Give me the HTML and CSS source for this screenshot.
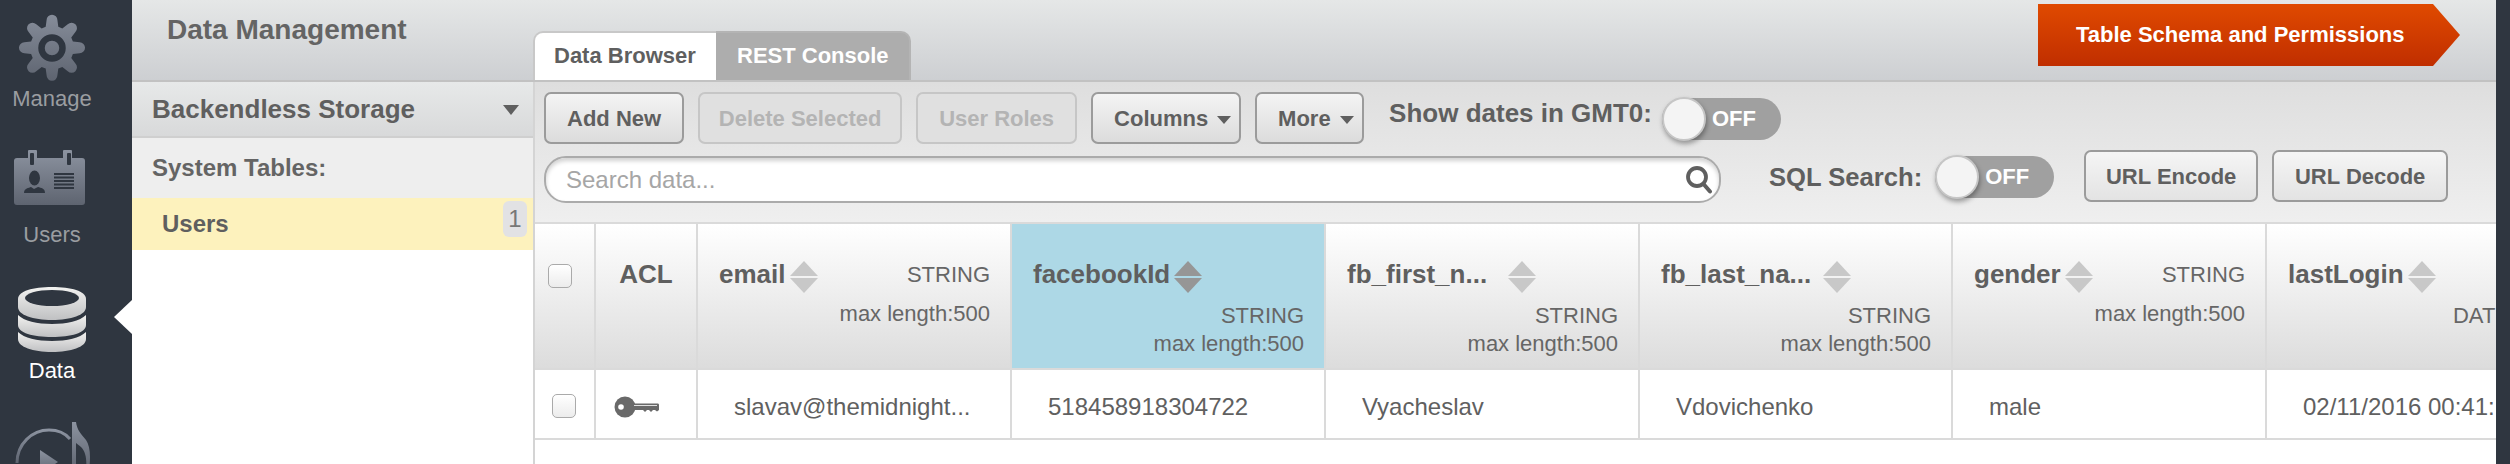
FILE: index.html
```html
<!DOCTYPE html>
<html lang="en">
<head>
<meta charset="utf-8">
<title>Data Management</title>
<link rel="stylesheet" href="styles.css">
</head>
<body>
<div class="app">
  <nav class="nav">
    <div class="nav-item">
      <div class="nav-icon">
        <svg class="ico-gear" width="68" height="68" viewBox="0 0 68 68">
          <defs>
            <linearGradient id="navg" x1="0" y1="0" x2="0" y2="1"><stop offset="0" stop-color="#868d9a"/><stop offset="1" stop-color="#5e6470"/></linearGradient>
          </defs>
          <g fill="url(#navg)">
            <path d="M28 3a6 6 0 0 1 12 0l1 7.500 4.500 1.800 6-4.600a6 6 0 0 1 8.500 8.500l-4.600 6 1.800 4.500 7.500 1a6 6 0 0 1 0 12l-7.500 1-1.800 4.500 4.600 6a6 6 0 0 1-8.500 8.500l-6-4.600-4.500 1.800-1 7.500a6 6 0 0 1-12 0l-1-7.500-4.500-1.800-6 4.600a6 6 0 0 1-8.500-8.500l4.600-6-1.800-4.500-7.500-1a6 6 0 0 1 0-12l7.500-1 1.800-4.500-4.600-6a6 6 0 0 1 8.500-8.500l6 4.600 4.500-1.800z" transform="translate(3.400 3.400) scale(.9)"/>
          </g>
          <circle cx="34" cy="34" r="10.500" fill="none" stroke="#2f3640" stroke-width="6.500"/>
        </svg>
      </div>
      <span class="nav-label">Manage</span>
    </div>
    <div class="nav-item">
      <div class="nav-icon nav-icon-card">
        <svg width="74" height="56" viewBox="0 0 74 56">
          <defs>
            <linearGradient id="navc" x1="0" y1="0" x2="0" y2="1"><stop offset="0" stop-color="#8c93a0"/><stop offset="1" stop-color="#5e6470"/></linearGradient>
          </defs>
          <path d="M4 8h11V1a1 1 0 0 1 1-1h7a1 1 0 0 1 1 1v7h26V1a1 1 0 0 1 1-1h7a1 1 0 0 1 1 1v7h10a3 3 0 0 1 3 3v41a3 3 0 0 1-3 3H4a3 3 0 0 1-3-3V11a3 3 0 0 1 3-3z" fill="url(#navc)"/>
          <rect x="17" y="3" width="4" height="12" rx="1" fill="#2f3640"/>
          <rect x="54" y="3" width="4" height="12" rx="1" fill="#2f3640"/>
          <ellipse cx="21.500" cy="28" rx="5.500" ry="7.500" fill="#2f3640"/>
          <path d="M11 43c0-5 5-5 7-6l3 2 4-2c3 1 7 1 7 6z" fill="#2f3640"/>
          <path d="M41 24h20M41 27.500h20M41 31h20M41 34.500h20M41 38h20" stroke="#2f3640" stroke-width="1.800"/>
        </svg>
      </div>
      <span class="nav-label">Users</span>
    </div>
    <div class="nav-item nav-item-active">
      <div class="nav-icon">
        <svg width="70" height="66" viewBox="0 0 70 66">
          <defs>
            <linearGradient id="navd" x1="0" y1="0" x2="0" y2="1"><stop offset="0" stop-color="#f2f2f0"/><stop offset="1" stop-color="#bfc0c2"/></linearGradient>
          </defs>
          <path d="M1 13C1 5 16 1 35 1s34 4 34 12v8c0 8-15 13-34 13S1 29 1 21z" fill="url(#navd)"/>
          <path d="M1 29c6 6 19 9 34 9s28-3 34-9v10c0 8-15 12-34 12S1 47 1 39z" fill="url(#navd)"/>
          <path d="M1 46c6 6 19 9 34 9s28-3 34-9v7c0 8-15 13-34 13S1 61 1 53z" fill="url(#navd)"/>
          <ellipse cx="35" cy="12" rx="27" ry="8" fill="#2f3640"/>
        </svg>
      </div>
      <span class="nav-label">Data</span>
    </div>
    <div class="nav-item">
      <div class="nav-icon">
        <svg width="78" height="60" viewBox="0 0 78 60">
          <defs>
            <linearGradient id="navm" x1="0" y1="0" x2="0" y2="1"><stop offset="0" stop-color="#8c93a0"/><stop offset="1" stop-color="#5e6470"/></linearGradient>
          </defs>
          <path d="M4 41C4 22 19 8 36 8c9 0 16 3 21 9" fill="none" stroke="url(#navm)" stroke-width="3"/>
          <path d="M27 28l18 12-18 12z" fill="url(#navm)"/>
          <path d="M59 0h4c1 8 5 12 10 18 4 6 5 16 3 30l-3 1c1-11 0-19-5-24-2-2-4-3-5-4v28h-4z" fill="url(#navm)"/>
        </svg>
      </div>
    </div>
  </nav>

  <div class="content">
    <header class="topbar">
      <h1 class="title">Data Management</h1>
      <div class="tabs">
        <span class="tab tab-active">Data Browser</span>
        <span class="tab tab-muted">REST Console</span>
      </div>
      <button class="schema">Table Schema and Permissions</button>
    </header>

    <div class="body">
      <aside class="side">
        <div class="side-head">
          <span>Backendless Storage</span>
          <svg class="side-caret" width="16" height="10" viewBox="0 0 16 10"><path d="M0 0h16L8 10z"/></svg>
        </div>
        <div class="side-group">System Tables:</div>
        <div class="side-item">
          <span>Users</span>
          <span class="badge">1</span>
        </div>
      </aside>

      <main class="main">
        <div class="toolbar">
          <div class="tool-row">
            <button class="btn">Add New</button>
            <button class="btn btn-off btn-delete">Delete Selected</button>
            <button class="btn btn-off">User Roles</button>
            <button class="btn btn-drop btn-columns">Columns<svg class="drop" width="14" height="8" viewBox="0 0 14 8"><path d="M0 0h14L7 8z"/></svg></button>
            <button class="btn btn-drop btn-more">More<svg class="drop" width="14" height="8" viewBox="0 0 14 8"><path d="M0 0h14L7 8z"/></svg></button>
            <span class="tool-label tool-label-gmt">Show dates in GMT0:</span>
            <span class="toggle toggle-gmt"><span class="knob"></span><span class="off">OFF</span></span>
          </div>
          <div class="tool-row tool-row-2">
            <div class="search">
              <span class="placeholder">Search data...</span>
              <svg class="search-ico" width="28" height="28" viewBox="0 0 28 28"><circle cx="12" cy="11" r="9" fill="none" stroke="#5f5f5f" stroke-width="3.800"/><path d="M18.500 18l6.500 7.500" stroke="#5f5f5f" stroke-width="4" stroke-linecap="round"/></svg>
            </div>
            <span class="tool-label tool-label-sql">SQL Search:</span>
            <span class="toggle toggle-sql"><span class="knob"></span><span class="off">OFF</span></span>
            <button class="btn btn-url btn-encode">URL Encode</button>
            <button class="btn btn-url">URL Decode</button>
          </div>
        </div>

        <div class="grid">
          <div class="grid-row grid-head">
            <div class="cell c-check"><span class="check check-head"></span></div>
            <div class="cell c-acl"><span class="acl">ACL</span></div>
            <div class="cell c-col hcell">
              <div class="hline"><span class="hname">email</span><span class="sort"><i class="up"></i><i class="down"></i></span><span class="type">STRING</span></div>
              <div class="meta meta-inline">max length:500</div>
            </div>
            <div class="cell c-col hcell hcell-sorted">
              <div class="hline"><span class="hname">facebookId</span><span class="sort"><i class="up"></i><i class="down"></i></span></div>
              <div class="meta meta-first">STRING</div>
              <div class="meta">max length:500</div>
            </div>
            <div class="cell c-col hcell">
              <div class="hline"><span class="hname hname-cut">fb_first_n...</span><span class="sort"><i class="up"></i><i class="down"></i></span></div>
              <div class="meta meta-first">STRING</div>
              <div class="meta">max length:500</div>
            </div>
            <div class="cell c-col c-col-narrow hcell">
              <div class="hline"><span class="hname hname-cut2">fb_last_na...</span><span class="sort"><i class="up"></i><i class="down"></i></span></div>
              <div class="meta meta-first">STRING</div>
              <div class="meta">max length:500</div>
            </div>
            <div class="cell c-col hcell">
              <div class="hline"><span class="hname">gender</span><span class="sort"><i class="up"></i><i class="down"></i></span><span class="type">STRING</span></div>
              <div class="meta meta-inline">max length:500</div>
            </div>
            <div class="cell c-last hcell">
              <div class="hline"><span class="hname">lastLogin</span><span class="sort"><i class="up"></i><i class="down"></i></span></div>
              <div class="meta meta-first">DATE</div>
            </div>
          </div>
          <div class="grid-row grid-data">
            <div class="cell c-check"><span class="check check-row"></span></div>
            <div class="cell c-acl">
              <svg class="key" width="46" height="22" viewBox="0 0 46 22"><circle cx="11" cy="11" r="10.500" fill="#696969"/><circle cx="7" cy="11" r="2.800" fill="#fff"/><path d="M18 7.500h26a1.500 1.500 0 0 1 1 1.500v5l-2 1.500-2-1.500h-2l-2 2-2-2h-2l-2 2-2-2H18z" fill="#696969"/><path d="M20 9.500h23" stroke="#fff" stroke-width=".8"/></svg>
            </div>
            <div class="cell c-col dcell">slavav@themidnight...</div>
            <div class="cell c-col dcell">518458918304722</div>
            <div class="cell c-col dcell">Vyacheslav</div>
            <div class="cell c-col c-col-narrow dcell">Vdovichenko</div>
            <div class="cell c-col dcell">male</div>
            <div class="cell c-last dcell">02/11/2016 00:41:</div>
          </div>
        </div>
      </main>
    </div>
  </div>

  <div class="strip"></div>
</div>
</body>
</html>
```

FILE: styles.css
```css
* { box-sizing: border-box; }
html, body { margin: 0; padding: 0; }
body {
  width: 2510px;
  height: 464px;
  overflow: hidden;
  background: #fff;
  font-family: "Liberation Sans", Arial, sans-serif;
  color: #5f5f5f;
}
button { font-family: inherit; margin: 0; }
.app { display: flex; width: 2510px; height: 464px; overflow: hidden; }

/* left nav */
.nav { width: 132px; flex: none; height: 464px; background: #2f3640; overflow: hidden; }
.nav-item { position: relative; height: 136px; padding: 14px 28px 0 0; display: flex; flex-direction: column; align-items: center; text-align: center; }
.nav-icon { height: 72px; display: flex; justify-content: center; align-items: flex-start; }
.nav-icon-card { margin-right: 4px; }
.ico-gear { display: block; }
.nav-label { font-size: 22px; line-height: 26px; color: #9a9da1; }
.nav-item-active .nav-label { color: #fff; }
.nav-item-active::after {
  content: "";
  position: absolute;
  right: 0;
  top: 28px;
  border-style: solid;
  border-width: 17px 18px 17px 0;
  border-color: transparent #fff transparent transparent;
}
.strip { width: 14px; flex: none; background: #2f3640; }

/* top bar */
.content { flex: 1; min-width: 0; display: flex; flex-direction: column; }
.topbar {
  height: 82px;
  flex: none;
  display: flex;
  background: linear-gradient(#e5e7e7, #cdcfd2);
  border-bottom: 2px solid #c2c2c2;
}
.title { width: 401px; flex: none; margin: 0; padding: 14px 0 0 35px; font-size: 28px; line-height: 32px; font-weight: bold; color: #646464; }
.tabs { display: flex; align-self: flex-end; height: 49px; }
.tab { display: flex; align-items: center; height: 49px; padding-bottom: 2px; font-size: 22px; font-weight: bold; }
.tab-active { width: 183px; padding-left: 19px; background: #fff; color: #5f5f5f; border: 2px solid #c8c8c8; border-right: 0; border-bottom: 0; border-radius: 10px 0 0 0; }
.tab-muted { width: 195px; padding-left: 21px; background: #adadad; color: #fff; border: 2px solid #b4b4b4; border-left: 0; border-bottom: 0; border-radius: 0 10px 0 0; }
.schema {
  width: 422px;
  height: 62px;
  margin: 4px 36px 0 auto;
  padding: 0 54px 0 38px;
  border: 0;
  white-space: nowrap;
  text-align: left;
  color: #fff;
  font-size: 22px;
  font-weight: bold;
  background: linear-gradient(#e04a00, #c02e00);
  clip-path: polygon(0 0, 395px 0, 100% 50%, 395px 100%, 0 100%);
}

/* body split */
.body { flex: 1; min-height: 0; display: flex; }
.side { width: 401px; flex: none; }
.side-head {
  height: 56px;
  display: flex;
  align-items: center;
  justify-content: space-between;
  padding: 0 14px 0 20px;
  background: linear-gradient(#e7e9e9, #d8d9da);
  border-bottom: 2px solid #cfcfcf;
  font-size: 26px;
  font-weight: bold;
  color: #5f5f5f;
}
.side-caret { fill: #5f5f5f; margin-top: 2px; }
.side-group { height: 60px; display: flex; align-items: center; padding-left: 20px; background: #eee; font-size: 24px; font-weight: bold; color: #646464; }
.side-item {
  height: 52px;
  display: flex;
  align-items: center;
  justify-content: space-between;
  padding: 0 6px 0 30px;
  background: #fdf2bd;
  font-size: 24px;
  font-weight: bold;
  color: #5f5f5f;
}
.badge { width: 24px; height: 36px; margin-bottom: 10px; display: flex; align-items: center; justify-content: center; border-radius: 6px; background: #e2e2e4; font-size: 24px; font-weight: normal; color: #777; }

/* toolbar */
.main { flex: 1; min-width: 0; overflow: hidden; border-left: 2px solid #d4d4d4; }
.toolbar { height: 140px; padding: 10px 0 0 9px; background: linear-gradient(#dedede, #efefef); }
.tool-row { display: flex; align-items: flex-start; height: 52px; }
.tool-row-2 { margin-top: 6px; height: 53px; }
.btn {
  height: 52px;
  padding: 2px 21px 0;
  margin-right: 14px;
  border: 2px solid #9b9b9b;
  border-radius: 7px;
  background: linear-gradient(#f4f4f4, #dcdcdc);
  color: #5f5f5f;
  font-size: 22px;
  font-weight: bold;
  white-space: nowrap;
}
.btn-off { background: #e0e0e0; border-color: #c6c6c6; color: #b4b4b4; }
.btn-delete { width: 204px; padding: 2px 0 0; }
.btn-drop { padding: 2px 0 0 21px; text-align: left; }
.btn-columns { width: 150px; }
.btn-more { width: 109px; }
.drop { fill: #5f5f5f; margin-left: 9px; vertical-align: 2px; }
.tool-label { font-size: 25.600px; font-weight: bold; color: #5f5f5f; white-space: nowrap; line-height: 30px; }
.tool-label-gmt { font-size: 26px; margin: 6px 10px 0 11px; }
.tool-label-sql { margin: 12px 13px 0 48px; }
.toggle { display: flex; align-items: center; width: 119px; height: 42px; border-radius: 21px; background: #a0a0a0; }
.toggle-gmt { margin-top: 6px; }
.toggle-sql { margin-top: 6px; margin-right: 30px; }
.knob { width: 44px; height: 44px; flex: none; border-radius: 50%; background: #f4f4f4; border: 2px solid #c6c6c6; box-shadow: 1px 3px 5px rgba(0, 0, 0, .35); }
.off { margin-left: 6px; color: #fff; font-size: 22px; font-weight: bold; }
.search {
  width: 1177px;
  height: 47px;
  margin-top: 6px;
  padding: 0 6px 0 20px;
  display: flex;
  align-items: center;
  justify-content: space-between;
  background: #fff;
  border: 2px solid #ababab;
  border-radius: 22px;
  box-shadow: inset 0 3px 4px rgba(0, 0, 0, .18);
}
.placeholder { font-size: 24px; color: #a6a6a6; }
.search-ico { display: block; }
.btn-url { width: 174px; padding: 2px 0 0; background: linear-gradient(#f5f5f5, #e3e3e3); }
.btn-encode + .btn-url { width: 176px; margin-right: 0; }

/* grid */
.grid { border-top: 2px solid #dadada; }
.grid-row { display: flex; }
.grid-head { height: 146px; border-bottom: 2px solid #dadada; background: linear-gradient(#fff, #dcdcdc); }
.grid-data { height: 70px; border-bottom: 2px solid #dadada; }
.cell { flex: none; border-right: 2px solid #dadada; }
.c-check { width: 61px; }
.c-acl { width: 102px; text-align: center; }
.c-col { width: 314px; }
.c-col-narrow { width: 313px; }
.c-last { width: 263px; border-right: 0; }
.check { display: block; width: 24px; height: 24px; border: 1px solid #aaa; border-radius: 5px; background: linear-gradient(#fff, #ececec); }
.check-head { margin: 40px 0 0 13px; }
.check-row { margin: 24px 0 0 17px; }
.acl { display: block; margin-top: 33px; font-size: 26px; line-height: 34px; font-weight: bold; }
.key { display: block; margin: 26px 0 0 18px; }

.hcell { padding: 33px 20px 0 21px; }
.hline { display: flex; align-items: flex-start; height: 34px; line-height: 34px; }
.hname { font-size: 26px; font-weight: bold; white-space: nowrap; }
.hname-cut { width: 142px; margin-right: 15px; }
.hname-cut2 { width: 153px; margin-right: 5px; }
.sort { width: 28px; flex: none; margin-left: 4px; margin-top: 4px; display: flex; flex-direction: column; gap: 2px; }
.sort i { display: block; width: 0; height: 0; border-style: solid; }
.sort .up { border-width: 0 14px 15px; border-color: transparent transparent #c8c8c8; }
.sort .down { border-width: 15px 14px 0; border-color: #c8c8c8 transparent transparent; }
.hcell-sorted { background: #add8e6; }
.hcell-sorted .sort .up { border-bottom-color: #969696; }
.hcell-sorted .sort .down { border-top-color: #969696; }
.type { margin-left: auto; font-size: 22px; color: #666; line-height: 36px; }
.meta { font-size: 22px; line-height: 28px; text-align: right; color: #666; white-space: nowrap; }
.meta-inline { margin-top: 9px; }
.meta-first { margin-top: 11px; }
.dcell { padding: 23px 0 0 36px; font-size: 24px; line-height: 28px; color: #606060; white-space: nowrap; overflow: hidden; }
```
